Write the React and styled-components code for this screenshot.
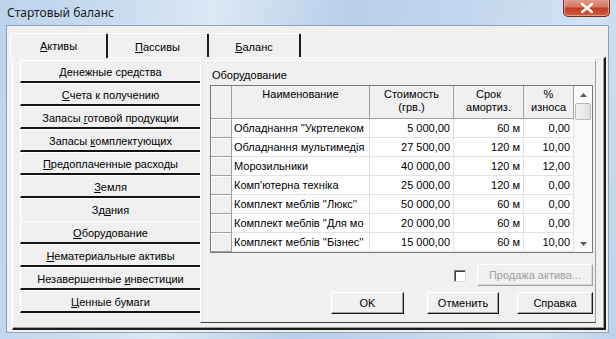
import React from "react";
import styled, { createGlobalStyle } from "styled-components";

const GlobalStyle = createGlobalStyle`
  body {
    margin: 0;
    font-family: "Liberation Sans", Arial, sans-serif;
    font-size: 11px;
    color: #000;
  }
`;

const leftItems = [
  { label: "&Денежные средства" },
  { label: "&Счета к получению" },
  { label: "Запасы &готовой продукции" },
  { label: "Запасы &комплектующих" },
  { label: "&Предоплаченные расходы" },
  { label: "&Земля" },
  { label: "Зд&ания", flat: true },
  { label: "&Оборудование" },
  { label: "&Нематериальные активы" },
  { label: "Незавершенные &инвестиции" },
  { label: "&Ценные бумаги" },
];

const rows = [
  ["Обладнання ''Укртелеком", "5 000,00", "60 м", "0,00"],
  ["Обладнання мультимедія", "27 500,00", "120 м", "10,00"],
  ["Морозильники", "40 000,00", "120 м", "12,00"],
  ["Комп'ютерна техніка", "25 000,00", "120 м", "0,00"],
  ["Комплект меблів ''Люкс''", "50 000,00", "60 м", "0,00"],
  ["Комплект меблів ''Для мо", "20 000,00", "60 м", "0,00"],
  ["Комплект меблів ''Бізнес''", "15 000,00", "60 м", "10,00"],
];

// "&" marks the underlined accelerator letter
function accel(text) {
  const i = text.indexOf("&");
  if (i < 0) return <span>{text}</span>;
  return (
    <span>
      {text.slice(0, i)}
      <U>{text[i + 1]}</U>
      {text.slice(i + 2)}
    </span>
  );
}

export default function App() {
  return (
    <>
      <GlobalStyle />
      <Frame>
        <TitleBar>
          <Title>Стартовый баланс</Title>
          <CloseButton>
            <svg width="12" height="10" viewBox="0 0 12 10">
              <path
                d="M1 1 L11 9 M11 1 L1 9"
                stroke="#fff"
                strokeWidth="2.6"
                strokeLinecap="square"
              />
            </svg>
          </CloseButton>
        </TitleBar>

        <Client>
          <Tabs>
            <Tab $active $width={98}>{accel("&Активы")}</Tab>
            <Tab $width={101}>{accel("&Пассивы")}</Tab>
            <Tab $width={92}>{accel("&Баланс")}</Tab>
          </Tabs>

          <TabPanel>
            <LeftList>
              {leftItems.map(item => (
                <ListButton key={item.label} $flat={item.flat}>
                  {accel(item.label)}
                </ListButton>
              ))}
            </LeftList>

            <RightPane>
              <GroupLabel>{accel("Обор&удование")}</GroupLabel>

              <Grid>
                <GridBody>
                  <HeaderRow>
                    <FixedHead />
                    <HeadCell $w={138}>Наименование</HeadCell>
                    <HeadCell $w={84}>
                      Стоимость
                      <br />
                      (грв.)
                    </HeadCell>
                    <HeadCell $w={70}>
                      Срок
                      <br />
                      амортиз.
                    </HeadCell>
                    <HeadCell $w={50}>
                      %
                      <br />
                      износа
                    </HeadCell>
                  </HeaderRow>
                  {rows.map(r => (
                    <DataRow key={r[0]}>
                      <FixedCell />
                      <Cell $w={138}>{r[0]}</Cell>
                      <Cell $w={84} $right>{r[1]}</Cell>
                      <Cell $w={70} $right>{r[2]}</Cell>
                      <Cell $w={50} $right>{r[3]}</Cell>
                    </DataRow>
                  ))}
                </GridBody>
                <ScrollBar>
                  <ScrollArrow>
                    <svg width="7" height="4" viewBox="0 0 7 4">
                      <path d="M0 4 L3.5 0 L7 4 Z" fill="#5a5a5a" />
                    </svg>
                  </ScrollArrow>
                  <Thumb />
                  <Track />
                  <ScrollArrow>
                    <svg width="7" height="4" viewBox="0 0 7 4">
                      <path d="M0 0 L3.5 4 L7 0 Z" fill="#5a5a5a" />
                    </svg>
                  </ScrollArrow>
                </ScrollBar>
              </Grid>

              <OptionRow>
                <CheckBox />
                <Button $w={116} disabled>
                  Продажа актива...
                </Button>
              </OptionRow>

              <ButtonRow>
                <Button $w={73}>OK</Button>
                <Button $w={72} $ml={23}>Отменить</Button>
                <Button $w={76} $ml={18}>Справка</Button>
              </ButtonRow>
            </RightPane>
          </TabPanel>
        </Client>
      </Frame>
    </>
  );
}

const U = styled.span`
  text-decoration: underline;
  text-underline-offset: 1px;
`;

const Frame = styled.div`
  width: 616px;
  height: 339px;
  display: flex;
  flex-direction: column;
  background: linear-gradient(
    100deg,
    #bcd4ec 0%,
    #c9dcf0 18%,
    #dbe8f5 32%,
    #b7cfe8 52%,
    #c4d8ee 72%,
    #d2e2f3 88%,
    #bdd3ea 100%
  );
  overflow: hidden;
`;

const TitleBar = styled.div`
  height: 26px;
  display: flex;
  justify-content: space-between;
  align-items: flex-start;
  padding: 0 6px 0 7px;
`;

const Title = styled.span`
  font-family: "Noto Sans", "Open Sans", sans-serif;
  font-size: 12px;
  line-height: 25px;
  color: #1b1b1b;
`;

const CloseButton = styled.div`
  width: 45px;
  height: 17px;
  margin-top: -1px;
  display: flex;
  align-items: center;
  justify-content: center;
  border: 1px solid #6b2f25;
  border-top: none;
  border-radius: 0 0 5px 5px;
  background: linear-gradient(#e6a090 0%, #d77660 45%, #c23c26 55%, #cf5c42 100%);
  box-shadow: inset 0 0 0 1px rgba(255, 220, 210, 0.5);
`;

const Client = styled.div`
  flex: 1;
  margin: 0 7px 6px 6px;
  border: 1px solid #8da3bb;
  background: #f0f0f0;
  padding: 7px 2px 2px 3px;
  display: flex;
  flex-direction: column;
`;

const Tabs = styled.div`
  display: flex;
  height: 24px;
  position: relative;
  z-index: 1;
`;

const Tab = styled.div`
  width: ${p => p.$width}px;
  box-sizing: border-box;
  display: flex;
  align-items: center;
  justify-content: center;
  padding-top: ${p => (p.$active ? 0 : 2)}px;
  background: #f0f0f0;
  border-top: 1px solid #fff;
  border-left: ${p => (p.$active ? "1px solid #fff" : "none")};
  border-right: 2px solid #1c1c1c;
  border-radius: 2px 2px 0 0;
  margin-bottom: ${p => (p.$active ? -1 : 0)}px;
`;

const TabPanel = styled.div`
  flex: 1;
  margin-left: 2px;
  display: flex;
  padding: 2px 8px 5px 7px;
  border-top: 1px solid #fff;
  border-left: 1px solid #fff;
  border-right: 2px solid #1c1c1c;
  border-bottom: 2px solid #1c1c1c;
  box-shadow: inset -1px -1px 0 #a0a0a0;
`;

const LeftList = styled.div`
  width: 180px;
  display: flex;
  flex-direction: column;
`;

const ListButton = styled.div`
  height: 23px;
  box-sizing: border-box;
  display: flex;
  align-items: center;
  justify-content: center;
  white-space: pre;
  border-top: 1px solid #fff;
  border-left: 1px solid #fff;
  border-bottom: 2px solid ${p => (p.$flat ? "transparent" : "#151515")};
  padding-top: 1px;
`;

const RightPane = styled.div`
  flex: 1;
  display: flex;
  flex-direction: column;
  padding: 8px 2px 8px 9px;
  border-top: 1px solid #fff;
  border-left: 1px solid #fff;
  border-right: 1px solid #a0a0a0;
  border-bottom: 1px solid #404040;
`;

const GroupLabel = styled.div`
  margin-left: 2px;
  line-height: 13px;
  height: 13px;
`;

const Grid = styled.div`
  margin-top: 3px;
  width: 383px;
  height: 168px;
  box-sizing: border-box;
  border: 1px solid #7a7a7a;
  display: flex;
  background: #fff;
`;

const GridBody = styled.div`
  width: 363px;
  display: flex;
  flex-direction: column;
`;

const HeaderRow = styled.div`
  height: 33px;
  display: flex;
  background: #f0f0f0;
  border-bottom: 1px solid #a0a0a0;
  box-sizing: border-box;
`;

const FixedHead = styled.div`
  width: 21px;
  box-sizing: border-box;
  border-right: 1px solid #a0a0a0;
`;

const HeadCell = styled.div`
  width: ${p => p.$w}px;
  box-sizing: border-box;
  border-right: 1px solid #a0a0a0;
  text-align: center;
  padding-top: 2px;
  line-height: 13px;
`;

const DataRow = styled.div`
  height: 19px;
  display: flex;
  box-sizing: border-box;
`;

const FixedCell = styled.div`
  width: 21px;
  box-sizing: border-box;
  background: #f0f0f0;
  border-right: 1px solid #a0a0a0;
  border-bottom: 1px solid #a0a0a0;
  box-shadow: inset 1px 1px 0 #fff;
`;

const Cell = styled.div`
  width: ${p => p.$w}px;
  box-sizing: border-box;
  border-right: 1px solid #e3e3e3;
  border-bottom: 1px solid #e3e3e3;
  padding: 0 ${p => (p.$right ? 3 : 2)}px 0 2px;
  line-height: 18px;
  white-space: nowrap;
  overflow: hidden;
  text-align: ${p => (p.$right ? "right" : "left")};
`;

const ScrollBar = styled.div`
  width: 18px;
  display: flex;
  flex-direction: column;
  background: #fafafa;
`;

const ScrollArrow = styled.div`
  height: 17px;
  display: flex;
  align-items: center;
  justify-content: center;
`;

const Thumb = styled.div`
  height: 17px;
  margin: 0 1px;
  box-sizing: border-box;
  border: 1px solid #b8b8b8;
  border-radius: 2px;
  background: linear-gradient(90deg, #f3f3f3, #e2e2e2);
`;

const Track = styled.div`
  flex: 1;
`;

const OptionRow = styled.div`
  margin-top: 11px;
  height: 22px;
  display: flex;
  align-items: center;
  justify-content: flex-end;
  gap: 11px;
`;

const CheckBox = styled.div`
  width: 12px;
  height: 12px;
  box-sizing: border-box;
  background: #fff;
  border-top: 1px solid #808080;
  border-left: 1px solid #808080;
  border-right: 1px solid #dcdcdc;
  border-bottom: 1px solid #dcdcdc;
  box-shadow: inset 1px 1px 0 #404040;
  margin-top: 2px;
`;

const ButtonRow = styled.div`
  margin-top: 6px;
  height: 22px;
  display: flex;
  justify-content: flex-end;
`;

const Button = styled.button`
  width: ${p => p.$w}px;
  height: 22px;
  margin-left: ${p => p.$ml || 0}px;
  padding: 0;
  font: inherit;
  color: ${p => (p.disabled ? "#a0a0a0" : "#000")};
  background: #f0f0f0;
  border-top: 1px solid #fff;
  border-left: 1px solid #fff;
  border-right: 1px solid ${p => (p.disabled ? "#a0a0a0" : "#1a1a1a")};
  border-bottom: 1px solid ${p => (p.disabled ? "#a0a0a0" : "#1a1a1a")};
  box-shadow: inset -1px -1px 0 ${p => (p.disabled ? "#d8d8d8" : "#a0a0a0")};
  border-radius: 0;
`;
